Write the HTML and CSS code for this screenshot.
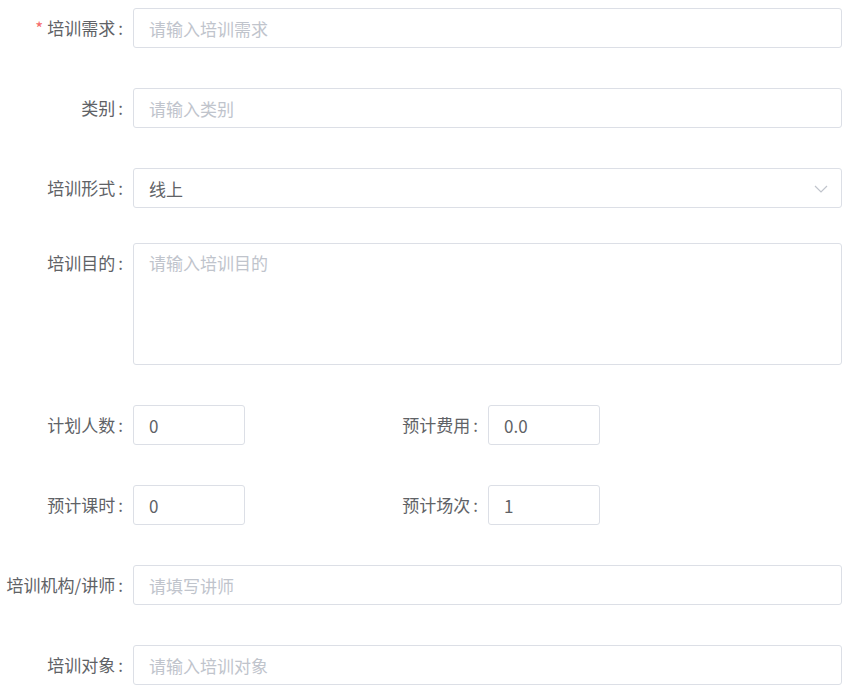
FILE: index.html
```html
<!DOCTYPE html>
<html lang="zh">

<head>
    <meta charset="UTF-8">
    <meta name="viewport" content="width=device-width, initial-scale=1.0">
    <title>培训需求</title>
    <link rel="stylesheet" href="styles.css">
</head>

<body>
    <form class="form">
        <div class="form-item">
            <label class="form-label is-required">培训需求<span class="colon">:</span></label>
            <div class="form-control">
                <input class="input" type="text" placeholder="请输入培训需求">
            </div>
        </div>
        <div class="form-item">
            <label class="form-label">类别<span class="colon">:</span></label>
            <div class="form-control">
                <input class="input" type="text" placeholder="请输入类别">
            </div>
        </div>
        <div class="form-item">
            <label class="form-label">培训形式<span class="colon">:</span></label>
            <div class="form-control select">
                <input class="input" type="text" value="线上" readonly>
                <svg class="select-arrow" width="14" height="8" viewBox="0 0 14 8">
                    <path d="M1 1 L7 7 L13 1" fill="none" stroke="#c0c4cc" stroke-width="1.2" />
                </svg>
            </div>
        </div>
        <div class="form-item form-item-textarea">
            <label class="form-label">培训目的<span class="colon">:</span></label>
            <div class="form-control">
                <textarea class="textarea" placeholder="请输入培训目的"></textarea>
            </div>
        </div>
        <div class="form-row">
            <div class="form-item">
                <label class="form-label">计划人数<span class="colon">:</span></label>
                <div class="form-control short">
                    <input class="input" type="text" value="0">
                </div>
            </div>
            <div class="form-item">
                <label class="form-label">预计费用<span class="colon">:</span></label>
                <div class="form-control short">
                    <input class="input" type="text" value="0.0">
                </div>
            </div>
        </div>
        <div class="form-row">
            <div class="form-item">
                <label class="form-label">预计课时<span class="colon">:</span></label>
                <div class="form-control short">
                    <input class="input" type="text" value="0">
                </div>
            </div>
            <div class="form-item">
                <label class="form-label">预计场次<span class="colon">:</span></label>
                <div class="form-control short">
                    <input class="input" type="text" value="1">
                </div>
            </div>
        </div>
        <div class="form-item">
            <label class="form-label">培训机构/讲师<span class="colon">:</span></label>
            <div class="form-control">
                <input class="input" type="text" placeholder="请填写讲师">
            </div>
        </div>
        <div class="form-item">
            <label class="form-label">培训对象<span class="colon">:</span></label>
            <div class="form-control">
                <input class="input" type="text" placeholder="请输入培训对象">
            </div>
        </div>
    </form>
</body>

</html>
```

FILE: styles.css
```css
* {
    padding: 0;
    margin: 0;
    box-sizing: border-box;
}

html,
body {
    width: 100%;
    height: 100%;
    background-color: #fff;
    font-family: "Noto Sans CJK SC", "Liberation Sans", sans-serif;
    font-size: 17px;
    color: #606266;
}

.form {
    padding: 8px 14px 0 0;
}

.form-item {
    display: flex;
    align-items: flex-start;
    margin-bottom: 40px;
}

.form>.form-item:last-child {
    margin-bottom: 0;
}

.form-item-textarea {
    margin-top: -5px;
}

.form-label {
    flex: 0 0 133px;
    height: 40px;
    line-height: 40px;
    padding-right: 10px;
    text-align: right;
    white-space: nowrap;
    color: #606266;
}

.form-label .colon {
    margin-left: 3px;
}

.form-label.is-required::before {
    content: "*";
    color: #f56c6c;
    margin-right: 4px;
}

.form-control {
    flex: 1;
    position: relative;
}

.form-control.short {
    flex: 0 0 112px;
}

.form-row {
    display: grid;
    grid-template-columns: 355px 1fr;
}

.input,
.textarea {
    display: block;
    width: 100%;
    border: 1px solid #dcdfe6;
    border-radius: 3px;
    font-family: inherit;
    font-size: 17px;
    color: #606266;
    background-color: #fff;
    outline: none;
}

.input {
    height: 40px;
    line-height: 38px;
    padding: 0 15px;
}

.textarea {
    height: 122px;
    padding: 8px 15px;
    line-height: 22px;
    resize: none;
}

.input::placeholder,
.textarea::placeholder {
    color: #c0c4cc;
}

.select .input {
    cursor: pointer;
    padding-right: 36px;
}

.select-arrow {
    position: absolute;
    right: 14px;
    top: 17px;
}
```
